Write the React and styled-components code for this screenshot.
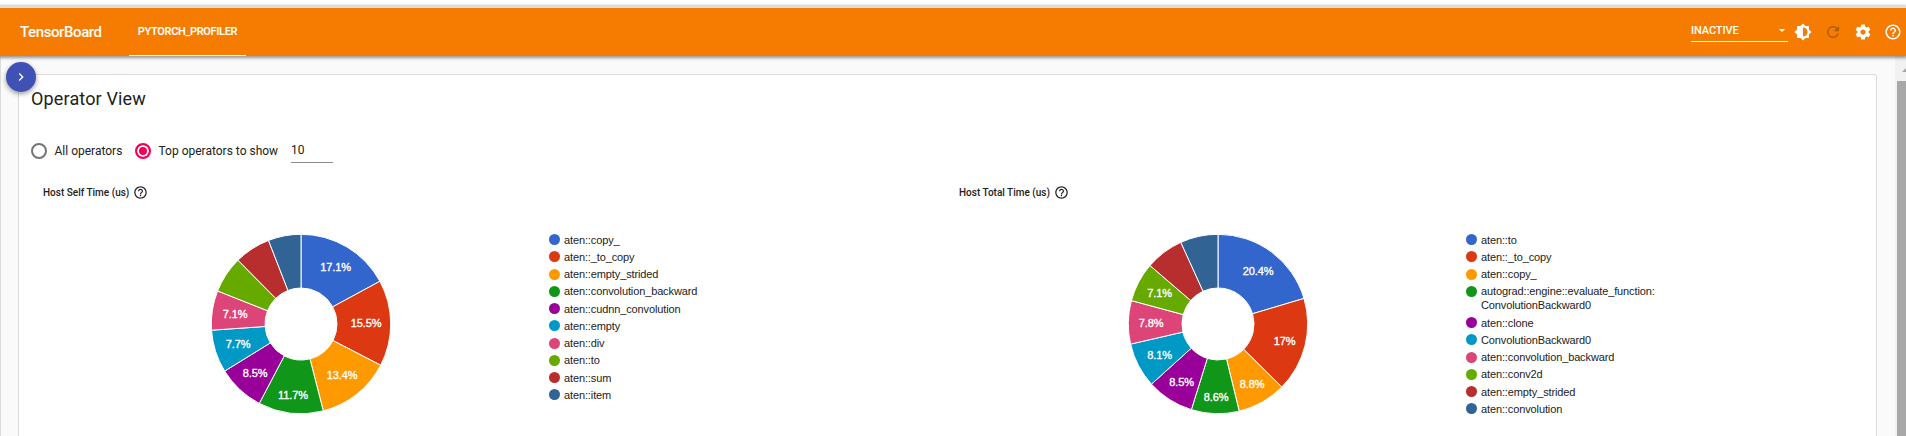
import React from "react";
import styled, { createGlobalStyle } from "styled-components";

const Global = createGlobalStyle`
  *, *::before, *::after { box-sizing: border-box; }
  html, body { margin: 0; height: 436px; overflow: hidden; background: #fff; }
  body { font-family: Roboto, "Liberation Sans", sans-serif; color: #212121; }
`;

const Page = styled.div`
  height: 436px;
  padding-top: 6px;
  display: flex;
  flex-direction: column;
  overflow: hidden;
`;

const Header = styled.header`
  flex: none;
  position: relative;
  z-index: 2;
  height: 50px;
  border-top: 2px solid #dadce0;
  background: #f57c00;
  color: #fff;
  display: flex;
  align-items: center;
  padding-left: 20px;
  padding-right: 4px;
  box-shadow: 0 1px 3px 1px rgba(0, 0, 0, 0.4);
`;

const Brand = styled.div`
  width: 109px;
  font-size: 15px;
  font-weight: 500;
  letter-spacing: -0.4px;
`;

const Tab = styled.div`
  width: 117px;
  height: 48px;
  border-bottom: 1px solid #fff;
  text-align: center;
  font-size: 11px;
  font-weight: 600;
  line-height: 47px;
  letter-spacing: -0.35px;
`;

const Spacer = styled.div`
  flex: 1;
`;

const Select = styled.div`
  width: 97px;
  height: 22px;
  margin-right: 6px;
  margin-bottom: 2px;
  padding-right: 3px;
  border-bottom: 1px solid #fff;
  display: flex;
  align-items: center;
  justify-content: space-between;
  font-size: 11px;
  font-weight: 500;
  letter-spacing: -0.1px;
`;

const Caret = styled.span`
  border: 3px solid transparent;
  border-top-color: #fff;
  border-bottom: 0;
`;

const Actions = styled.div`
  display: flex;
  gap: 12px;
`;

const Icon = styled.svg`
  display: block;
  flex: none;
  width: ${(p) => p.$size}px;
  height: ${(p) => p.$size}px;
  fill: ${(p) => p.$color || "currentColor"};
`;

const Body = styled.div`
  flex: 1;
  min-height: 0;
  display: flex;
  position: relative;
  background: #fafafa;
  border-left: 1px solid #dcdcdc;
`;

const Main = styled.main`
  flex: 1;
  padding: 18px 18px 0 17px;
`;

const Card = styled.section`
  height: 380px;
  padding: 0 12px;
  border: 1px solid #dcdcdc;
  border-radius: 3px;
  background: #fff;
`;

const ExpandButton = styled.button`
  position: absolute;
  left: 5px;
  top: 6px;
  width: 30px;
  height: 30px;
  padding: 0;
  border: 0;
  border-radius: 50%;
  background: #3f51b5;
  color: #fff;
  display: grid;
  place-items: center;
  box-shadow: 0 2px 5px rgba(0, 0, 0, 0.4);
`;

const Scrollbar = styled.div`
  width: 11px;
  flex: none;
  padding-left: 2px;
  background: #f1f1f1;
  overflow: hidden;
`;

const ScrollArrow = styled.div`
  width: 0;
  height: 0;
  margin: 12px 0 9px 5px;
  border: 4px solid transparent;
  border-top: 0;
  border-bottom-color: #a3a3a3;
`;

const ScrollThumb = styled.div`
  height: 400px;
  background: #a8a8a8;
`;

const Title = styled.h1`
  margin: 0;
  padding-top: 12px;
  font-size: 18px;
  font-weight: 400;
  line-height: 24px;
  letter-spacing: 0.15px;
`;

const Controls = styled.div`
  display: flex;
  align-items: center;
  height: 30px;
  margin-top: 25px;
  font-size: 12px;
`;

const Radio = styled.span`
  width: 16px;
  height: 16px;
  border-radius: 50%;
  border: 2px solid ${(p) => (p.$on ? "#f50057" : "#757575")};
  background: ${(p) => (p.$on ? "#f50057" : "transparent")};
  box-shadow: ${(p) => (p.$on ? "inset 0 0 0 2px #fff" : "none")};
`;

const RadioLabel = styled.span`
  width: ${(p) => p.$width}px;
  padding-left: 7.5px;
  white-space: nowrap;
`;

const NumberField = styled.div`
  width: 42px;
  height: 27px;
  margin-bottom: 3px;
  border-bottom: 1px solid #8a8a8a;
  line-height: 29px;
`;

const Charts = styled.div`
  display: flex;
  margin-top: 14px;
`;

const Chart = styled.article`
  width: ${(p) => p.$width}px;
  flex: none;
`;

const ChartTitle = styled.h2`
  display: flex;
  align-items: center;
  gap: 4px;
  height: 24px;
  margin: 0;
  padding-left: 12px;
  font-size: 10px;
  font-weight: 500;
`;

const ChartBody = styled.div`
  display: flex;
  align-items: flex-start;
  padding-left: ${(p) => p.$left}px;
`;

const Donut = styled.svg`
  display: block;
  flex: none;
  width: 182px;
  height: 182px;
  margin-top: 29px;
  overflow: visible;
`;

const SliceText = styled.text`
  fill: #fff;
  stroke: #fff;
  stroke-width: 0.35px;
  font: 11px "Liberation Sans", Arial, sans-serif;
  letter-spacing: -0.1px;
  text-anchor: middle;
`;

const Legend = styled.ul`
  list-style: none;
  margin: 28.5px 0 0 ${(p) => p.$left}px;
  padding: 0;
  font: 11px/14px "Liberation Sans", Arial, sans-serif;
  letter-spacing: -0.12px;
  color: #222;
`;

const LegendItem = styled.li`
  display: flex;
  gap: 4px;
  padding-bottom: 3.27px;
  white-space: pre;
`;

const Dot = styled.span`
  width: 11px;
  height: 11px;
  margin-top: 1.5px;
  border-radius: 50%;
  background: ${(p) => p.$color};
`;

const HELP =
  "M11 18h2v-2h-2v2zm1-16C6.48 2 2 6.48 2 12s4.48 10 10 10 10-4.48 10-10S17.52 2 12 2zm0 18c-4.41 0-8-3.59-8-8s3.59-8 8-8 8 3.59 8 8-3.59 8-8 8zm0-14c-2.21 0-4 1.79-4 4h2c0-1.1.9-2 2-2s2 .9 2 2c0 2-3 1.75-3 5h2c0-2.25 3-2.5 3-5 0-2.21-1.79-4-4-4z";
const BRIGHTNESS =
  "M20 15.31L23.31 12 20 8.69V4h-4.69L12 .69 8.69 4H4v4.69L.69 12 4 15.31V20h4.69L12 23.31 15.31 20H20v-4.69zM12 18V6c3.31 0 6 2.69 6 6s-2.69 6-6 6z";
const REFRESH =
  "M17.65 6.35C16.2 4.9 14.21 4 12 4c-4.42 0-7.99 3.58-7.99 8s3.57 8 7.99 8c3.73 0 6.84-2.55 7.73-6h-2.08c-.82 2.33-3.04 4-5.65 4-3.31 0-6-2.69-6-6s2.69-6 6-6c1.66 0 3.14.69 4.22 1.78L13 11h7V4l-2.35 2.35z";
const SETTINGS =
  "M19.43 12.98c.04-.32.07-.64.07-.98s-.03-.66-.07-.98l2.11-1.65c.19-.15.24-.42.12-.64l-2-3.46c-.12-.22-.39-.3-.61-.22l-2.49 1c-.52-.4-1.08-.73-1.69-.98l-.38-2.65C14.46 2.18 14.25 2 14 2h-4c-.25 0-.46.18-.49.42l-.38 2.65c-.61.25-1.17.59-1.69.98l-2.49-1c-.23-.09-.49 0-.61.22l-2 3.46c-.13.22-.07.49.12.64l2.11 1.65c-.04.32-.07.65-.07.98s.03.66.07.98l-2.11 1.65c-.19.15-.24.42-.12.64l2 3.46c.12.22.39.3.61.22l2.49-1c.52.4 1.08.73 1.69.98l.38 2.65c.03.24.24.42.49.42h4c.25 0 .46-.18.49-.42l.38-2.65c.61-.25 1.17-.59 1.69-.98l2.49 1c.23.09.49 0 .61-.22l2-3.46c.12-.22.07-.49-.12-.64l-2.11-1.65zM12 15.5c-1.93 0-3.5-1.57-3.5-3.5s1.57-3.5 3.5-3.5 3.5 1.57 3.5 3.5-1.57 3.5-3.5 3.5z";
const CHEVRON = "M10 6L8.59 7.41 13.17 12l-4.58 4.59L10 18l6-6z";

const Glyph = ({ d, size = 18, color }) => (
  <Icon viewBox="0 0 24 24" $size={size} $color={color}>
    <path d={d} />
  </Icon>
);

const COLORS = [
  "#3366cc", "#dc3912", "#ff9900", "#109618", "#990099",
  "#0099c6", "#dd4477", "#66aa00", "#b82e2e", "#316395",
];

// Each slice: legend name, percent, and the label's centre relative to the donut centre.
const SELF_TIME = [
  ["aten::copy_", 17.1, 34.5, -57],
  ["aten::_to_copy", 15.5, 65, -1],
  ["aten::empty_strided", 13.4, 41, 51],
  ["aten::convolution_backward", 11.7, -8, 71],
  ["aten::cudnn_convolution", 8.5, -46, 49],
  ["aten::empty", 7.7, -63, 20],
  ["aten::div", 7.1, -66, -10],
  ["aten::to", 6.6],
  ["aten::sum", 6.5],
  ["aten::item", 5.9],
];

const TOTAL_TIME = [
  ["aten::to", 20.4, 40, -53],
  ["aten::_to_copy", 17, 66.5, 17],
  ["aten::copy_", 8.8, 34, 60],
  ["autograd::engine::evaluate_function:\nConvolutionBackward0", 8.6, -2, 73],
  ["aten::clone", 8.5, -36.5, 58],
  ["ConvolutionBackward0", 8.1, -58.5, 31],
  ["aten::convolution_backward", 7.8, -67, -1],
  ["aten::conv2d", 7.1, -58.5, -31],
  ["aten::empty_strided", 6.9],
  ["aten::convolution", 6.8],
];

const OUTER = 89.7;
const INNER = 36;

const at = (radius, fraction) => {
  const a = fraction * 2 * Math.PI;
  return `${(radius * Math.sin(a)).toFixed(2)} ${(-radius * Math.cos(a)).toFixed(2)}`;
};

const slicePath = (from, to) =>
  `M${at(INNER, from)}L${at(OUTER, from)}A${OUTER} ${OUTER} 0 0 1 ${at(OUTER, to)}` +
  `L${at(INNER, to)}A${INNER} ${INNER} 0 0 0 ${at(INNER, from)}Z`;

function DonutChart({ title, data, width, left, legendLeft }) {
  const total = data.reduce((sum, d) => sum + d[1], 0);
  let start = 0;
  const slices = data.map(([name, value, x, y], i) => {
    const from = start / total;
    start += value;
    return { name, value, x, y, color: COLORS[i], d: slicePath(from, start / total) };
  });
  return (
    <Chart $width={width}>
      <ChartTitle>
        {title}
        <Glyph d={HELP} size={15} />
      </ChartTitle>
      <ChartBody $left={left}>
        <Donut viewBox="-91 -91 182 182">
          {slices.map((s) => (
            <path key={s.name} d={s.d} fill={s.color} stroke="#fff" strokeWidth="1" />
          ))}
          {slices.map(
            (s) =>
              s.x !== undefined && (
                <SliceText key={s.name} x={s.x} y={s.y + 3.8}>
                  {s.value}%
                </SliceText>
              )
          )}
        </Donut>
        <Legend $left={legendLeft}>
          {slices.map((s) => (
            <LegendItem key={s.name}>
              <Dot $color={s.color} />
              <span>{s.name}</span>
            </LegendItem>
          ))}
        </Legend>
      </ChartBody>
    </Chart>
  );
}

export default function App() {
  return (
    <>
      <Global />
      <Page>
        <Header>
          <Brand>TensorBoard</Brand>
          <Tab>PYTORCH_PROFILER</Tab>
          <Spacer />
          <Select>
            INACTIVE
            <Caret />
          </Select>
          <Actions>
            <Glyph d={BRIGHTNESS} />
            <Glyph d={REFRESH} color="rgba(0, 0, 0, 0.26)" />
            <Glyph d={SETTINGS} />
            <Glyph d={HELP} />
          </Actions>
        </Header>
        <Body>
          <Main>
            <Card>
              <Title>Operator View</Title>
              <Controls>
                <Radio />
                <RadioLabel $width={88}>All operators</RadioLabel>
                <Radio $on />
                <RadioLabel $width={140}>Top operators to show</RadioLabel>
                <NumberField>10</NumberField>
              </Controls>
              <Charts>
                <DonutChart title="Host Self Time (us)" data={SELF_TIME} width={916} left={179} legendLeft={157} />
                <DonutChart title="Host Total Time (us)" data={TOTAL_TIME} width={916} left={180} legendLeft={157} />
              </Charts>
            </Card>
          </Main>
          <Scrollbar>
            <ScrollArrow />
            <ScrollThumb />
          </Scrollbar>
          <ExpandButton>
            <Glyph d={CHEVRON} size={16} />
          </ExpandButton>
        </Body>
      </Page>
    </>
  );
}
